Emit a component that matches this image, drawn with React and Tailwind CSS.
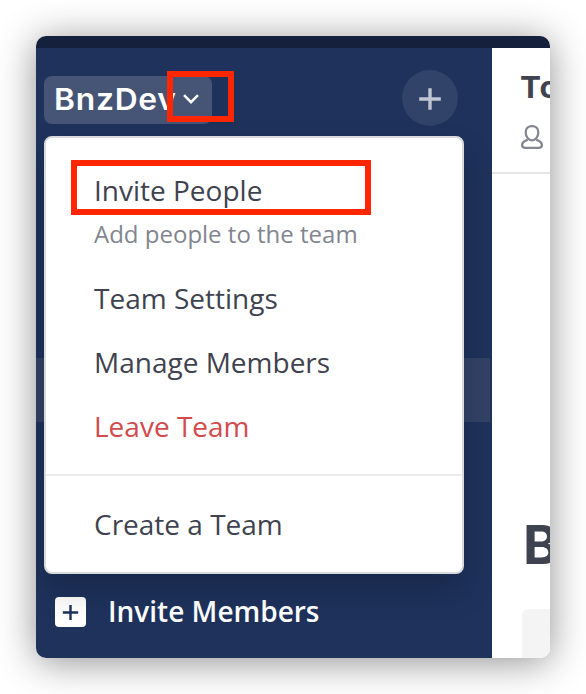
function PlusIcon({ className }) {
  return (
    <svg className={className} viewBox="0 0 24 24" fill="none" stroke="currentColor" strokeWidth="3.4">
      <path d="M12 1.3v21.4M1.2 12h21.6" />
    </svg>
  );
}

function PersonIcon() {
  return (
    <svg className="h-6 w-[22px]" viewBox="0 0 22 24" fill="none" stroke="#858892" strokeWidth="2.3" strokeLinejoin="round">
      <path d="M11 1.1C7 1.1 4.7 3.7 4.7 7.3c0 4.2 2.8 8.1 6.3 8.1s6.3-3.9 6.3-8.1C17.3 3.7 15 1.1 11 1.1Z" />
      <path d="M6.8 14.6C3.5 15.8 1.1 17.2 1.1 20c0 2 1.2 2.9 3.2 2.9h13.4c2 0 3.2-.9 3.2-2.9 0-2.8-2.4-4.2-5.7-5.4" />
    </svg>
  );
}

function MenuItem({ children, danger }) {
  return (
    <div className={`h-16 pl-12 text-[28px] leading-[64px] ${danger ? "text-[#d24b4e]" : "text-[#3f4350]"}`}>
      {children}
    </div>
  );
}

function TeamMenu() {
  return (
    <div className="absolute left-2 top-[100px] h-[438px] w-[420px] rounded-lg border-2 border-[#d9dadd] bg-white py-4 shadow-[0_16px_32px_rgba(0,0,0,0.2)]">
      <div className="h-[112px] pl-12 pt-[14px]">
        <div className="text-[28px] leading-[44px] text-[#3f4350]">Invite People</div>
        <div className="text-2xl leading-[44px] text-[#82858f]">Add people to the team</div>
      </div>
      <MenuItem>Team Settings</MenuItem>
      <MenuItem>Manage Members</MenuItem>
      <MenuItem danger>Leave Team</MenuItem>
      <div className="my-4 h-0.5 bg-[#ededee]" />
      <MenuItem>Create a Team</MenuItem>
      <div className="absolute left-[25px] top-[22px] h-[55px] w-[300px] border-[6px] border-[#ff2600]" />
    </div>
  );
}

function Sidebar() {
  return (
    <aside className="flex w-[456px] shrink-0 flex-col bg-[#1e325c]">
      <header className="flex h-[100px] items-center justify-between pl-2 pr-[34px]">
        <div className="relative mt-1 flex h-12 w-[168px] items-center rounded-lg bg-[#465575] pl-2.5 text-white">
          <span className="mb-0.5 w-[118px] origin-left scale-x-[1.06] whitespace-nowrap font-['Inter'] text-[30px] font-semibold leading-none tracking-[0.7px]">BnzDev</span>
          <svg className="ml-[11px] h-4 w-4" viewBox="0 0 16 16" fill="none" stroke="currentColor" strokeWidth="2.4">
            <path d="M1 3.2 8 10.2 15 3.2" />
          </svg>
          <div className="absolute -top-[5px] left-[123px] h-[51px] w-[67px] border-[6px] border-[#ff2600]" />
        </div>
        <div className="mb-px flex h-14 w-14 items-center justify-center rounded-full bg-[#314369] text-[#bfc5d3]">
          <PlusIcon className="mt-[3px] h-6 w-6" />
        </div>
      </header>
      <div className="mt-[210px] h-16 w-[454px] bg-[#324266]" />
      <div className="mt-auto flex h-[92px] items-center pl-[19px]">
        <div className="flex h-[30px] w-[31px] items-center justify-center rounded bg-white text-[#1e325c]">
          <PlusIcon className="h-[17px] w-[17px]" />
        </div>
        <span className="mb-0.5 ml-[22px] text-[28px] font-semibold leading-none text-white">Invite Members</span>
      </div>
    </aside>
  );
}

function Channel() {
  return (
    <main className="flex w-[58px] flex-col overflow-hidden bg-white text-[#3f4350]">
      <header className="h-[126px] shrink-0 border-b-2 border-[#e5e5e7] pl-[28px] pt-[24px]">
        <div className="origin-left scale-x-[1.05] whitespace-nowrap font-['Inter'] text-[30px] font-bold leading-[30px] tracking-[1px]">To</div>
        <div className="ml-px mt-[23px]">
          <PersonIcon />
        </div>
      </header>
      <div className="mt-auto pl-[30px]">
        <div className="ml-px font-['Inter'] text-[54px] font-bold leading-[54px]">B</div>
        <div className="mt-[37px] h-[49px] w-20 rounded-tl-md bg-[#f4f4f4]" />
      </div>
    </main>
  );
}

export default function App() {
  return (
    <div className="h-[694px] w-[586px] overflow-hidden bg-white p-9 font-['Open_Sans',sans-serif]">
      <div className="h-[622px] w-[514px] rounded-[10px] shadow-[0_4px_38px_rgba(0,0,0,0.44)]">
        <div className="relative flex h-full flex-col overflow-hidden rounded-[10px]">
          <div className="h-3 shrink-0 bg-[#15203d]" />
          <div className="flex min-h-0 flex-1">
            <Sidebar />
            <Channel />
          </div>
          <TeamMenu />
        </div>
      </div>
    </div>
  );
}
